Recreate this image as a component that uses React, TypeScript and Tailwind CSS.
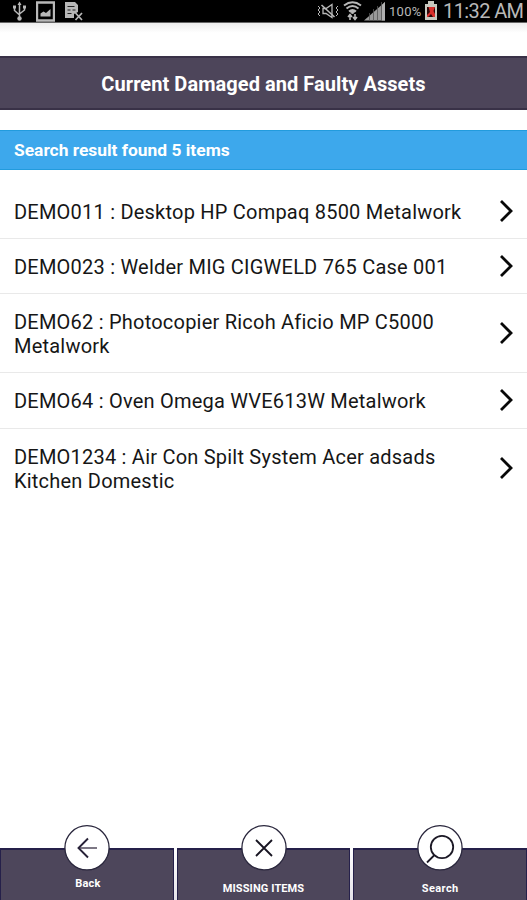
import type { ReactNode } from "react";

const assets = [
  { code: "DEMO011", name: "Desktop HP Compaq 8500 Metalwork" },
  { code: "DEMO023", name: "Welder MIG CIGWELD 765 Case 001" },
  { code: "DEMO62", name: "Photocopier Ricoh Aficio MP C5000 Metalwork" },
  { code: "DEMO64", name: "Oven Omega WVE613W Metalwork" },
  { code: "DEMO1234", name: "Air Con Spilt System Acer adsads Kitchen Domestic" }
];

function StatusBar() {
  return (
    <header className="flex h-[23px] shrink-0 items-center justify-between border-b border-[#666] bg-black pl-3 pr-[5px] text-[#b8b8b8]">
      <div className="flex items-center gap-[9px]">
        {/* usb */}
        <svg width="15" height="20" viewBox="0 0 15 20" fill="none" stroke="currentColor" strokeWidth="1.5">
          <path d="M7.5 3v14M2.5 6v3.5l5 4.5M12.5 6v3l-5 4" />
          <path d="M7.5 0.5l2 3.5h-4z" fill="currentColor" stroke="none" />
          <path d="M1 4.5h3v3H1zM11 4.5h3v3h-3z" fill="currentColor" stroke="none" />
          <circle cx="7.5" cy="17.5" r="2.2" fill="currentColor" stroke="none" />
        </svg>
        {/* picture */}
        <svg width="19" height="21" viewBox="0 0 19 21" fill="none">
          <path d="M1 1.5h17v18H1z" stroke="currentColor" strokeWidth="2.4" />
          <path d="M4.5 15.5v-3l3-2 2.5 1.5 4.5-4v7.5z" fill="currentColor" />
        </svg>
        {/* sheet with a cross */}
        <svg width="19" height="20" viewBox="0 0 19 20" fill="none">
          <path d="M1 1h10l3 3v7l-4 2v4H1z" fill="currentColor" />
          <path d="M3.5 5.5h7M3.5 9h3M8.5 9h3M3.5 12.5h4" stroke="#222" strokeWidth="1.2" />
          <path d="M11.5 12l6.5 7M18 12l-6.5 7" stroke="currentColor" strokeWidth="1.7" />
        </svg>
      </div>
      <div className="flex items-center">
        {/* muted, vibrating */}
        <svg width="22" height="16" viewBox="0 0 22 16" fill="none" stroke="currentColor">
          <path d="M6 5.5h3l6-4v13l-6-4H6z" strokeWidth="1.3" />
          <path d="M4.5 2l13 12" strokeWidth="1.6" />
          <path d="M1 3l2 2-2 2 2 2-2 2 2 2M21 3l-2 2 2 2-2 2 2 2-2 2" strokeWidth="1" />
        </svg>
        <svg className="ml-[4px]" width="19" height="20" viewBox="0 0 19 20" fill="none" stroke="currentColor">
          <path d="M1 4.5Q9.5-2 18 4.5M3.5 7.5Q9.5 2.5 15.5 7.5M6 10.5Q9.5 7.5 13 10.5" strokeWidth="2" />
          <path d="M9.5 13L7 10.5h5z" fill="currentColor" />
          <path d="M7 19v-5M5 16l2-2.5L9 16M12 13v5M10 16l2 2.5 2-2.5" strokeWidth="1.6" />
        </svg>
        <svg className="ml-[2px]" width="22" height="20" viewBox="0 0 22 20">
          <path d="M0 19.5L21 1v18.5z" fill="#999" />
          <path d="M5.5 12v8M9.5 8v12M13.5 5v15M17.5 1v19" stroke="#555" strokeWidth="0.8" />
          <path d="M18 4l3-3v18.5h-3z" fill="#b0b0b0" />
        </svg>
        <span className="ml-[3px] w-[33px] whitespace-nowrap text-[13px] leading-none tracking-[0.3px]">100%</span>
        <svg className="ml-[2px]" width="14" height="20" viewBox="0 0 14 20">
          <path d="M1 3h3V0h6v3h3v16H1z" fill="#c7c9bf" />
          <path d="M3 6h8v10H3z" fill="#2c0909" />
          <path d="M4.5 6H11l-1.5 4 1.5 3v3H9l-2-3-3 3H3v-2l3-3z" fill="#d9302b" />
        </svg>
        <span className="ml-[5px] w-[79px] whitespace-nowrap text-[20px] leading-none tracking-[-0.6px]">11:32 AM</span>
      </div>
    </header>
  );
}

function AssetRow({ code, name }: { code: string; name: string }) {
  return (
    <li className="flex items-center justify-between border-b border-[#e9e9e9] px-[14px] py-[15.15px] last:border-b-0">
      <p className="-mb-px w-[455px] pt-px text-[20px] leading-[24px] tracking-[0.22px] text-[#161616]">
        {`${code} : ${name}`}
      </p>
      <svg width="13" height="22" viewBox="0 0 13 22" fill="none" className="shrink-0">
        <path d="M1 1l10 10L1 21" stroke="#080808" strokeWidth="2.8" />
      </svg>
    </li>
  );
}

function FooterButton({ label, labelClass, children }: { label: string; labelClass: string; children: ReactNode }) {
  return (
    <button className="relative flex h-[52px] flex-1 justify-center border-x border-t-2 border-[#25204a] bg-[#4d465b]">
      <svg className="absolute -top-[25px]" width="46" height="46" viewBox="0 0 46 46" fill="none">
        <circle cx="23" cy="22.8" r="22.1" fill="#fff" stroke="#29263c" strokeWidth="1.3" />
        {children}
      </svg>
      <span className={`whitespace-nowrap text-[11px] font-bold leading-[14px] text-white ${labelClass}`}>{label}</span>
    </button>
  );
}

export default function App() {
  return (
    <main className="flex h-[900px] w-[527px] flex-col overflow-hidden bg-white font-[Roboto,sans-serif]">
      <StatusBar />
      <div className="h-[33px] shrink-0 bg-linear-to-b from-[#ededed] to-white to-30%" />
      <h1 className="flex h-[54px] shrink-0 items-center justify-center border-y-2 border-[#393147] bg-[#4d455a] pt-[2px] text-[20px] font-bold tracking-[0.06px] text-white">
        <span className="whitespace-nowrap">Current Damaged and Faulty Assets</span>
      </h1>
      <h2 className="mt-[20px] flex h-[40px] shrink-0 items-center border-y border-[#229bdd] bg-[#3da8ec] pl-[14px] text-[17.4px] font-bold text-white">
        Search result found 5 items
      </h2>
      <ul className="mt-[13.4px] flex-1">
        {assets.map((asset) => (
          <AssetRow key={asset.code} {...asset} />
        ))}
      </ul>
      <nav className="flex shrink-0 gap-[3px] bg-linear-to-b from-white to-[#e4e2e8]">
        <FooterButton label="Back" labelClass="mt-[27px] pl-[2px] tracking-[0.2px]">
          <path d="M14 23h19" stroke="#77717f" strokeWidth="1.9" />
          <path d="M24 13.5L14.5 23l9.5 9.5" stroke="#282238" strokeWidth="1.9" />
        </FooterButton>
        <FooterButton label="MISSING ITEMS" labelClass="mt-[32px] tracking-[0.1px]">
          <path d="M15 15l16 16M31 15L15 31" stroke="#171421" strokeWidth="1.8" />
        </FooterButton>
        <FooterButton label="Search" labelClass="mt-[32px] tracking-[0.4px]">
          <circle cx="25" cy="22" r="11.2" stroke="#1c1926" strokeWidth="1.8" />
          <path d="M17.5 30L10 37.5" stroke="#1c1926" strokeWidth="1.8" />
        </FooterButton>
      </nav>
    </main>
  );
}
